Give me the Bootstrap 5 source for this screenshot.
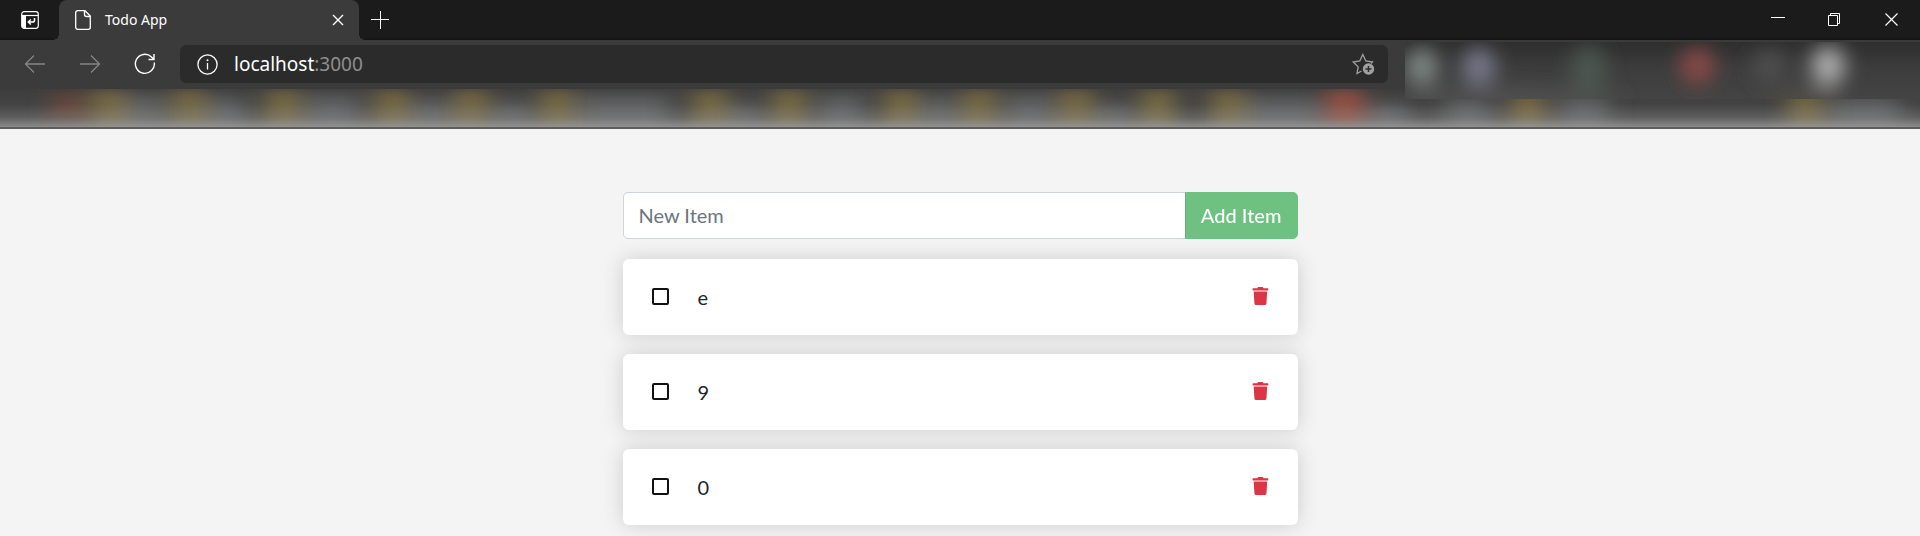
<!DOCTYPE html>
<html lang="en">
<head>
<meta charset="utf-8">
<meta name="viewport" content="width=device-width, initial-scale=1">
<title>Todo App</title>
<link href="https://cdn.jsdelivr.net/npm/bootstrap@5.3.0/dist/css/bootstrap.min.css" rel="stylesheet">
<style>
  body { background: #f4f4f4; color: #212529; font-family: Lato, sans-serif; font-size: 20px; }
  svg { display: block; flex: none; }
  .browser { font-family: "Noto Sans", "Open Sans", sans-serif; color: #fff; background: #3b3b3b; }
  .browser button { background: none; border: 0; padding: 0; color: inherit; display: flex; align-items: center; justify-content: center; }
  .tabstrip { height: 40px; background: #1b1b1b; box-shadow: inset 0 -3px 2px -2px #121212; }
  .tab-actions { width: 59px; }
  .page-tab { width: 300px; height: 40px; background: #3b3b3b; border-radius: 8px 8px 0 0; padding: 0 15px 0 16px; font-size: 14px; line-height: 20px; position: relative; }
  .page-tab span { padding: 0 0 1px 14px; }
  .page-tab::before, .page-tab::after { content: ""; position: absolute; bottom: 0; width: 6px; height: 6px; }
  .page-tab::before { right: 100%; background: radial-gradient(circle at 0 0, #1b1b1b 6px, #3b3b3b 6px); }
  .page-tab::after { left: 100%; background: radial-gradient(circle at 100% 0, #1b1b1b 6px, #3b3b3b 6px); }
  .new-tab { width: 42px; }
  .win-btn { width: 57px; }
  .toolbar { height: 49px; }
  .nav-group { width: 180px; padding: 0 24px; }
  .muted-ico { color: #858585 !important; }
  .address { height: 38px; margin-top: 5px; background: #2b2b2b; border-radius: 6px; padding: 0 13px 0 17px; font-size: 19px; }
  .address span { line-height: 28px; }
  .address .port { color: #8f8f8f; }
  .extensions { width: 515px; height: 57px; margin: 2px 0 -10px 17px; z-index: 1; background: #3d3d3d; }
  .bookmarks { height: 40px; border-bottom: 2px solid #5e5c5c; }
  .todo-col { width: 100%; max-width: 675px; margin: 63px auto 0; }
  .todo-form { margin-bottom: 20px; }
  .todo-form .form-control { height: 47px; font-size: 20px; padding: 0 15px 2px; border: 1px solid #ced4da; border-radius: 5px; }
  .todo-form .form-control::placeholder { color: #6c757d; opacity: 1; }
  .todo-form .btn { height: 47px; font-size: 20px; line-height: 30px; font-weight: 500; padding: 0 15px 2px; border-radius: 5px; background: #28a745; border-color: #28a745; color: #fff; opacity: .65; }
  .item { height: 76px; margin-bottom: 19px; padding: 0 28px; background: #fff; border-radius: 6px; box-shadow: 0 0 20px #ccc; }
  .item input { appearance: none; width: 17px; height: 17px; margin: 0 0 2px 1px; border: 2px solid #111; border-radius: 2px; background: #fff; }
  .item label { padding: 0 0 1px 29px; }
  .trash { background: none; border: 0; padding: 0 0 2px; color: #dc3545; }
</style>
</head>
<body class="d-flex flex-column min-vh-100">
<header class="browser">
  <div class="tabstrip d-flex">
    <button class="tab-actions" aria-label="Tab actions">
      <svg width="18" height="18" viewBox="0 0 18 18" fill="none" stroke="currentColor"><rect x=".7" y=".7" width="16.6" height="16.6" rx="2.5" stroke-width="1.2"/><path d="M1 4.5h16" stroke-width="1.2"/><path d="M1 4h4v13H2.5L1 15.500z" fill="currentColor" stroke="none"/><path d="M13.500 7v2.200q0 1.800-2 1.800H7.500M9.800 8.500 7.300 11l2.500 2.500" stroke-width="1.500"/></svg>
    </button>
    <div class="page-tab d-flex align-items-center">
      <svg width="16" height="20" viewBox="0 0 16 20" fill="none" stroke="currentColor" stroke-width="1.300"><path d="M2.700.7h7.300l5.300 5.300v11.300a2 2 0 0 1-2 2H2.700a2 2 0 0 1-2-2V2.700a2 2 0 0 1 2-2zM9.500 1v3.500a2 2 0 0 0 2 2H15"/></svg>
      <span class="flex-grow-1">Todo App</span>
      <button aria-label="Close tab"><svg width="12" height="12" viewBox="0 0 12 12" stroke="currentColor" stroke-width="1.400"><path d="m1 1 10 10M11 1 1 11"/></svg></button>
    </div>
    <button class="new-tab" aria-label="New tab"><svg width="18" height="18" viewBox="0 0 18 18" stroke="currentColor"><path d="M0 8.500h18M9.500 0v18"/></svg></button>
    <div class="d-flex ms-auto">
      <button class="win-btn" aria-label="Minimize"><svg width="14" height="14" viewBox="0 0 14 14" stroke="currentColor"><path d="M0 4.500h14"/></svg></button>
      <button class="win-btn" aria-label="Restore"><svg width="13" height="15" viewBox="0 0 13 15" fill="none" stroke="currentColor"><path d="M.5 2.500h9v10h-9zM2.500 2.500v-2h9v10h-2"/></svg></button>
      <button class="win-btn" aria-label="Close window"><svg width="13" height="15" viewBox="0 0 13 15" stroke="currentColor" stroke-width="1.200"><path d="m.5.5 12 12M12.500.5l-12 12"/></svg></button>
    </div>
  </div>
  <div class="toolbar d-flex">
    <div class="nav-group d-flex align-items-center justify-content-between">
      <button class="muted-ico" aria-label="Back"><svg width="22" height="22" viewBox="0 0 22 22" fill="none" stroke="currentColor" stroke-width="1.300"><path d="M21 10H1.500M10 1.500 1.500 10l8.500 8.500"/></svg></button>
      <button class="muted-ico" aria-label="Forward"><svg width="22" height="22" viewBox="0 0 22 22" fill="none" stroke="currentColor" stroke-width="1.300"><path d="M1 10h19.500M12 1.500l8.500 8.500-8.500 8.500"/></svg></button>
      <button aria-label="Refresh"><svg width="22" height="24" viewBox="0 0 22 24" fill="none" stroke="currentColor" stroke-width="1.400"><path d="M20.300 9.500A9.500 9.500 0 1 1 17.500 4l2.300 2.300M20 1v5.500h-5.500"/></svg></button>
    </div>
    <div class="address d-flex align-items-center flex-grow-1">
      <svg width="21" height="21" viewBox="0 0 21 21" fill="none" stroke="#fff" stroke-width="1.300"><circle cx="10.500" cy="10.500" r="9.600"/><path d="M10.500 9v6.500"/><circle cx="10.500" cy="6.300" r="1" fill="#fff" stroke="none"/></svg>
      <span class="flex-grow-1 ps-3">localhost<span class="port">:3000</span></span>
      <button class="muted-ico" aria-label="Add to favorites"><svg width="23" height="22" viewBox="0 0 23 22" fill="none" stroke="#a0a0a0" stroke-width="1.300"><path d="M9.500 18 5 20.500l1.200-6.600L1.200 9l6.600-1L10.800 1.500 13.800 8l6.700 1-1.500 1.500"/><circle cx="16.500" cy="16" r="5.700" fill="#a0a0a0" stroke="none"/><path d="M13.500 16h6M16.500 13v6" stroke="#2b2b2b" stroke-width="1.500"/></svg></button>
    </div>
    <svg class="extensions position-relative overflow-hidden" viewBox="0 0 516 57" preserveAspectRatio="none" aria-hidden="true">
      <defs>
        <filter id="soft" filterUnits="userSpaceOnUse" x="-60" y="-60" width="640" height="180"><feGaussianBlur stdDeviation="10"/></filter>
        <linearGradient id="panel" x2="0" y2="1"><stop offset="0" stop-color="#2e2e2e"/><stop offset=".45" stop-color="#3c3c3c"/><stop offset="1" stop-color="#444"/></linearGradient>
      </defs>
      <rect width="516" height="57" fill="url(#panel)"/>
      <g filter="url(#soft)">
        <ellipse cx="17" cy="25" rx="16" ry="19" fill="#7e8885"/>
        <ellipse cx="74" cy="25" rx="17" ry="19" fill="#777889"/>
        <ellipse cx="184" cy="28" rx="18" ry="24" fill="#4b5650"/>
        <ellipse cx="293" cy="24" rx="18" ry="18" fill="#884846"/>
        <ellipse cx="365" cy="24" rx="17" ry="16" fill="#505050"/>
        <ellipse cx="424" cy="24" rx="17" ry="20" fill="#acacac"/>
        <ellipse cx="110" cy="57" rx="110" ry="9" fill="#525252"/>
        <ellipse cx="400" cy="57" rx="36" ry="8" fill="#524f45"/>
      </g>
    </svg>
  </div>
  <div class="bookmarks">
    <svg width="100%" height="38" viewBox="0 0 1920 38" preserveAspectRatio="none" aria-hidden="true">
      <defs>
        <filter id="haze" filterUnits="userSpaceOnUse" x="-60" y="-60" width="2040" height="160"><feGaussianBlur stdDeviation="12 7"/></filter>
        <linearGradient id="glow" x2="0" y2="1"><stop offset="0" stop-color="#a0a0a0" stop-opacity="0"/><stop offset=".4" stop-color="#a0a0a0" stop-opacity=".06"/><stop offset=".75" stop-color="#a0a0a0" stop-opacity=".34"/><stop offset="1" stop-color="#a0a0a0" stop-opacity=".78"/></linearGradient>
      </defs>
      <rect width="1920" height="38" fill="#3d3d3d"/>
      <g filter="url(#haze)">
        <g fill="#5c5d5e">
          <rect x="125" y="6" width="40" height="42"/><rect x="208" y="8" width="38" height="40"/><rect x="305" y="6" width="55" height="42"/><rect x="412" y="10" width="38" height="38"/><rect x="494" y="12" width="36" height="36"/><rect x="578" y="6" width="92" height="42"/><rect x="730" y="14" width="30" height="34"/><rect x="818" y="6" width="46" height="42"/><rect x="922" y="8" width="34" height="40"/><rect x="1005" y="6" width="48" height="42"/><rect x="1098" y="14" width="32" height="34"/><rect x="1246" y="8" width="75" height="40"/><rect x="1368" y="14" width="40" height="34"/><rect x="1445" y="8" width="46" height="40"/><rect x="1560" y="6" width="48" height="42"/><rect x="1830" y="8" width="70" height="40"/>
        </g>
        <rect x="52" y="4" width="32" height="32" fill="#664238"/>
        <g fill="#74673f">
          <rect x="92" y="1" width="34" height="47"/><rect x="172" y="1" width="34" height="47"/><rect x="266" y="1" width="34" height="47"/><rect x="375" y="1" width="34" height="47"/><rect x="454" y="1" width="34" height="47"/><rect x="540" y="1" width="34" height="47"/><rect x="693" y="1" width="34" height="47"/><rect x="772" y="1" width="34" height="47"/><rect x="884" y="1" width="34" height="47"/><rect x="962" y="1" width="34" height="47"/><rect x="1059" y="1" width="34" height="47"/><rect x="1141" y="1" width="34" height="47"/><rect x="1211" y="1" width="34" height="47"/><rect x="1511" y="3" width="34" height="45"/><rect x="1789" y="3" width="34" height="45"/>
        </g>
        <rect x="1328" y="0" width="34" height="42" fill="#964e40"/>
      </g>
      <rect width="1920" height="38" fill="url(#glow)"/>
    </svg>
  </div>
</header>

<main class="todo-col flex-grow-1">
  <form class="input-group todo-form">
    <input type="text" class="form-control" placeholder="New Item" aria-label="New item">
    <button type="submit" class="btn btn-success" disabled>Add Item</button>
  </form>
  <div class="item d-flex align-items-center">
    <input type="checkbox" id="todo-1"><label for="todo-1" class="flex-grow-1">e</label>
    <button class="trash" aria-label="Remove item"><svg width="18" height="18" viewBox="-16 0 512 512" fill="currentColor"><path d="M432 32H312l-9.400-18.700A24 24 0 0 0 281.100 0H166.800a23.700 23.700 0 0 0-21.400 13.300L136 32H16A16 16 0 0 0 0 48v32a16 16 0 0 0 16 16h416a16 16 0 0 0 16-16V48a16 16 0 0 0-16-16zM53.200 467a48 48 0 0 0 47.900 45h245.800a48 48 0 0 0 47.900-45L416 128H32z"/></svg></button>
  </div>
  <div class="item d-flex align-items-center">
    <input type="checkbox" id="todo-2"><label for="todo-2" class="flex-grow-1">9</label>
    <button class="trash" aria-label="Remove item"><svg width="18" height="18" viewBox="-16 0 512 512" fill="currentColor"><path d="M432 32H312l-9.400-18.700A24 24 0 0 0 281.100 0H166.800a23.700 23.700 0 0 0-21.400 13.300L136 32H16A16 16 0 0 0 0 48v32a16 16 0 0 0 16 16h416a16 16 0 0 0 16-16V48a16 16 0 0 0-16-16zM53.200 467a48 48 0 0 0 47.900 45h245.800a48 48 0 0 0 47.900-45L416 128H32z"/></svg></button>
  </div>
  <div class="item d-flex align-items-center mb-0">
    <input type="checkbox" id="todo-3"><label for="todo-3" class="flex-grow-1">0</label>
    <button class="trash" aria-label="Remove item"><svg width="18" height="18" viewBox="-16 0 512 512" fill="currentColor"><path d="M432 32H312l-9.400-18.700A24 24 0 0 0 281.100 0H166.800a23.700 23.700 0 0 0-21.400 13.300L136 32H16A16 16 0 0 0 0 48v32a16 16 0 0 0 16 16h416a16 16 0 0 0 16-16V48a16 16 0 0 0-16-16zM53.200 467a48 48 0 0 0 47.900 45h245.800a48 48 0 0 0 47.900-45L416 128H32z"/></svg></button>
  </div>
</main>
<script src="https://cdn.jsdelivr.net/npm/bootstrap@5.3.0/dist/js/bootstrap.bundle.min.js"></script>
</body>
</html>
